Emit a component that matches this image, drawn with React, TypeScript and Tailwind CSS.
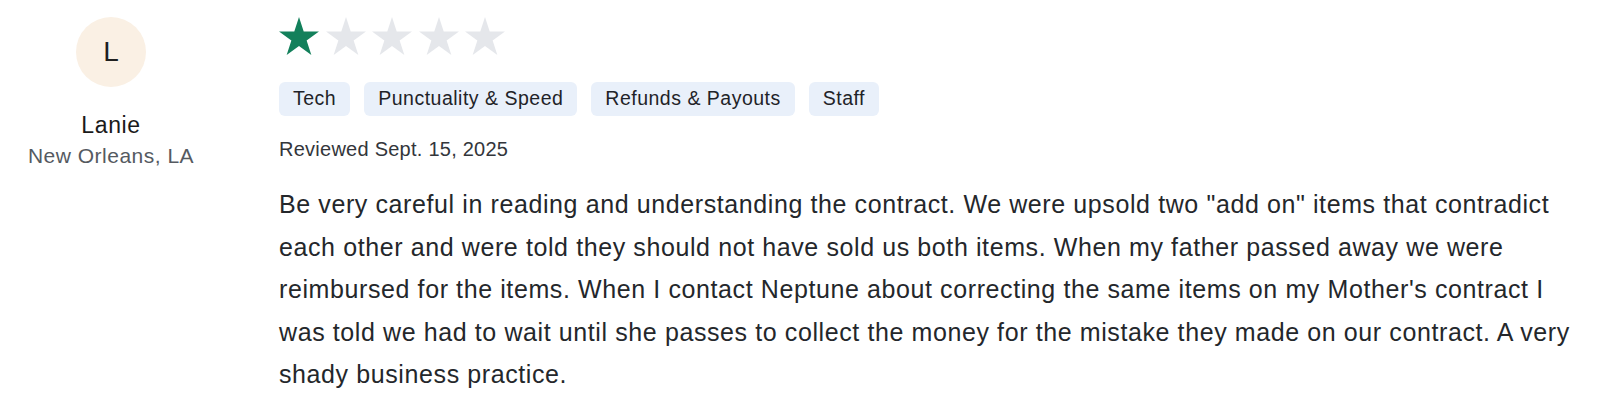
import React from 'react'

const tags = ['Tech', 'Punctuality & Speed', 'Refunds & Payouts', 'Staff']

const Star = ({ filled }: { filled: boolean }) => (
  <svg width="40" height="38" viewBox="0 0 40 38.04" className="shrink-0">
    <path
      d="M20 0 L24.72 14.53 L40 14.53 L27.64 23.51 L32.36 38.04 L20 29.06 L7.64 38.04 L12.36 23.51 L0 14.53 L15.28 14.53 Z"
      fill={filled ? '#13805b' : '#e5e7eb'}
    />
  </svg>
)

export default function App() {
  const rating = 1

  return (
    <div className="w-[1600px] h-[410px] bg-white flex font-['Liberation_Sans',Arial,sans-serif] overflow-hidden">
      {/* reviewer */}
      <div className="w-[222px] shrink-0 flex flex-col items-center pt-[17px]">
        <div className="w-[70px] h-[70px] rounded-full bg-[#faf0e4] flex items-center justify-center text-[28px] text-[#1f1f1f]">
          L
        </div>
        <div className="mt-[24px] text-[23px] leading-[28px] text-[#1a1a1a] tracking-[0.6px]">Lanie</div>
        <div className="mt-[4px] text-[21px] leading-[26px] text-[#555a61] tracking-[0.5px]">New Orleans, LA</div>
      </div>

      {/* review */}
      <div className="flex-1 pl-[57px] pr-[12px] pt-[17px]">
        <div className="flex gap-[6.5px]">
          {[1, 2, 3, 4, 5].map((i) => (
            <Star key={i} filled={i <= rating} />
          ))}
        </div>

        <div className="flex gap-[14px] mt-[27px]">
          {tags.map((t) => (
            <span
              key={t}
              className="h-[34px] px-[14px] flex items-center rounded-[6px] bg-[#e9f0fa] text-[19.5px] text-[#1f2328] tracking-[0.5px]"
            >
              {t}
            </span>
          ))}
        </div>

        <div className="mt-[21px] text-[20px] leading-[24px] text-[#33363b] tracking-[0.25px]">
          Reviewed Sept. 15, 2025
        </div>

        <p className="mt-[22px] text-[25px] leading-[42.5px] text-[#24272b] tracking-[0.6px]">
          Be very careful in reading and understanding the contract. We were upsold two "add on" items that contradict
          each other and were told they should not have sold us both items. When my father passed away we were
          reimbursed for the items. When I contact Neptune about correcting the same items on my Mother's contract I
          was told we had to wait until she passes to collect the money for the mistake they made on our contract. A
          very shady business practice.
        </p>
      </div>
    </div>
  )
}
